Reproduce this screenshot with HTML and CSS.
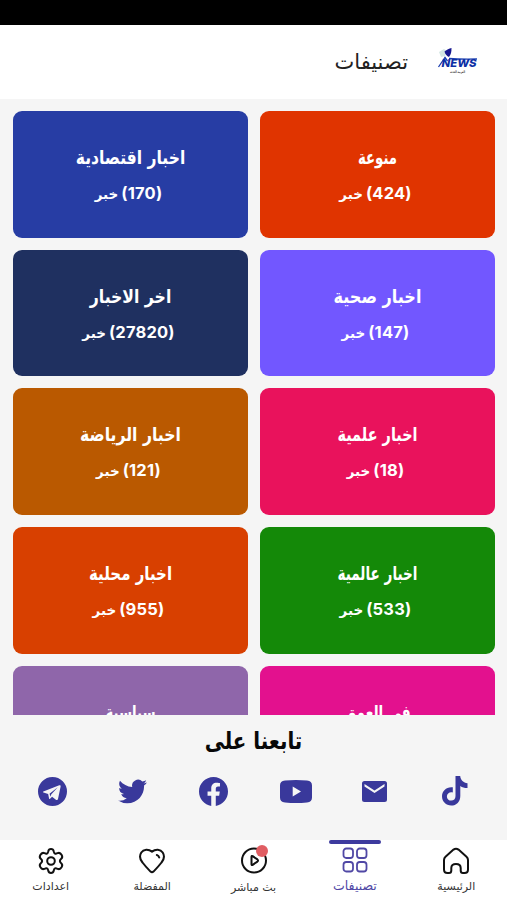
FILE: index.html
```html
<!DOCTYPE html>
<html lang="ar" dir="rtl">
<head>
<meta charset="utf-8">
<title>تصنيفات</title>
<link rel="stylesheet" href="styles.css">
</head>
<body>
<div class="status"></div>
<header class="header">
  <svg class="logo" viewBox="0 0 42 30" direction="ltr">
    <path d="M2 5l5-3 3 2-2 5-4 1z" fill="#d3e6e3"/>
    <path d="M7.500 4.500c2.500-2 4.500-3 7-3.500 0 4-.5 6.500-2.500 9-2-1-3.800-2.500-4.500-5.500z" fill="#16168f"/>
    <path d="M1.500 20L8 10.500l2.500 3.500M12 11.500c8 .6 17 .7 28 .5" fill="none" stroke="#1c3fb0" stroke-width="1.300"/>
    <text class="logo-word" x="4.500" y="20.300" textLength="35" lengthAdjust="spacingAndGlyphs">NEWS</text>
    <text class="logo-sub" x="13" y="25.500" textLength="15" lengthAdjust="spacingAndGlyphs">العربية الحدث</text>
  </svg>
  <h1 class="title">تصنيفات</h1>
</header>
<main class="list">
  <section class="card red"><h2>منوعة</h2><p><bdi>(424)</bdi><span>خبر</span></p></section>
  <section class="card blue"><h2>اخبار اقتصادية</h2><p><bdi>(170)</bdi><span>خبر</span></p></section>
  <section class="card violet"><h2>اخبار صحية</h2><p><bdi>(147)</bdi><span>خبر</span></p></section>
  <section class="card navy"><h2>اخر الاخبار</h2><p><bdi>(27820)</bdi><span>خبر</span></p></section>
  <section class="card rose"><h2>اخبار علمية</h2><p><bdi>(18)</bdi><span>خبر</span></p></section>
  <section class="card amber"><h2>اخبار الرياضة</h2><p><bdi>(121)</bdi><span>خبر</span></p></section>
  <section class="card green"><h2>اخبار عالمية</h2><p><bdi>(533)</bdi><span>خبر</span></p></section>
  <section class="card orange"><h2>اخبار محلية</h2><p><bdi>(955)</bdi><span>خبر</span></p></section>
  <section class="card pink"><h2>في العمق</h2></section>
  <section class="card purple"><h2>سياسية</h2></section>
</main>
<section class="follow">
  <h2 class="follow-title">تابعنا على</h2>
  <div class="social">
    <svg class="s-tiktok" viewBox="0 0 26 30"><path d="M13.500 0h4.700c.4 4 3.300 6.900 7.300 7.200v4.900c-2.700.1-5.200-.8-7.200-2.200v10C18.300 25.600 14.500 29.500 9.200 29.500 4 29.500 0 25.500 0 20.300c0-5.600 4.800-9.900 10.800-9v5.200c-3-.9-5.900 1-5.900 3.900 0 2.400 1.900 4.200 4.300 4.200 2.600 0 4.300-1.900 4.300-4.700z"/></svg>
    <svg class="s-mail" viewBox="0 0 25 21"><path d="M2.500 0h20A2.500 2.500 0 0 1 25 2.500v16a2.500 2.500 0 0 1-2.500 2.500h-20A2.500 2.500 0 0 1 0 18.500v-16A2.500 2.500 0 0 1 2.500 0zm20 3.100L12.500 9.500 2.500 3.100v2.500l10 6.400 10-6.400z"/></svg>
    <svg class="s-youtube" viewBox="0 0 32 23"><path fill-rule="evenodd" d="M5 .5Q16-.5 27 .5c3.500.3 5 2 5 5v12c0 3-1.500 4.700-5 5q-11 1-22 0c-3.500-.3-5-2-5-5v-12c0-3 1.500-4.700 5-5zM12.700 6.600v9.800l8.300-4.900z"/></svg>
    <svg class="s-facebook" viewBox="0 0 24 24"><path d="M24 12.070C24 5.440 18.630.070 12 .070S0 5.440 0 12.070c0 5.990 4.390 10.950 10.130 11.850v-8.380H7.080v-3.470h3.050V9.430c0-3.010 1.790-4.670 4.530-4.670 1.310 0 2.690.24 2.690.24v2.950h-1.520c-1.490 0-1.950.93-1.950 1.870v2.250h3.320l-.53 3.470h-2.790v8.380C19.610 23.020 24 18.060 24 12.070z"/></svg>
    <svg class="s-twitter" viewBox="0 0 24 20"><path d="M23.950 2.570a10 10 0 0 1-2.820.780 4.960 4.960 0 0 0 2.160-2.730c-.950.560-2 .960-3.130 1.190a4.920 4.920 0 0 0-8.380 4.480C7.690 6.090 4.070 4.130 1.640 1.160a4.820 4.820 0 0 0-.670 2.480c0 1.710.870 3.210 2.190 4.100a4.900 4.900 0 0 1-2.230-.620v.060a4.920 4.920 0 0 0 3.950 4.830 5 5 0 0 1-2.210.080 4.940 4.940 0 0 0 4.600 3.420A9.870 9.870 0 0 1 0 17.540a13.990 13.990 0 0 0 7.560 2.210c9.050 0 14-7.500 14-13.980l-.020-.640a9.940 9.940 0 0 0 2.410-2.560z"/></svg>
    <svg class="s-telegram" viewBox="0 0 28 28"><path fill-rule="evenodd" d="M14 0a14 14 0 1 0 0 28 14 14 0 0 0 0-28zM5.200 13.900 20.500 8c.9-.3 1.500.2 1.300 1.300l-2.500 12c-.2 1-.9 1.200-1.700.8l-4-3-2 1.900c-.5.500-.8.300-.9-.3l-.9-4.400-4.500-1.400c-.7-.3-.7-.7-.1-1zm5.900 2.200 8-6.300-6.400 7.100-.4 2.200z"/></svg>
  </div>
</section>
<nav class="nav">
  <a class="tab"><svg viewBox="0 0 28 28"><path d="M2 13Q2 11 3.500 9.700L11.500 2.600Q14 .8 16.500 2.600L24.500 9.700Q26 11 26 13V22.500Q26 26 22.500 26H21Q18.700 26 18.700 23.500V21Q18.700 17 14 17T9.300 21V23.500Q9.300 26 7 26H5.500Q2 26 2 22.500z"/></svg><span>الرئيسية</span></a>
  <a class="tab active"><svg viewBox="0 0 28 28"><rect x="2.500" y="1.500" width="9.500" height="9.500" rx="2.800"/><rect x="16" y="1.500" width="9.500" height="9.500" rx="2.800"/><rect x="2.500" y="15" width="9.500" height="9.500" rx="2.800"/><rect x="16" y="15" width="9.500" height="9.500" rx="2.800"/></svg><span>تصنيفات</span></a>
  <a class="tab live"><svg viewBox="0 0 28 28"><circle cx="14" cy="13.500" r="12"/><path d="M11.500 9.800Q11.500 8.500 12.700 9.200L17.400 12.400Q18.700 13.500 17.400 14.600L12.700 17.800Q11.500 18.500 11.500 17.200z"/></svg><i class="dot"></i><span>بث مباشر</span></a>
  <a class="tab"><svg viewBox="0 0 28 28"><path d="M14 4.600C17.500 1.800 22.500 2 24.700 5.500 26.700 8.700 26 12.500 23.500 15.500 21 18.800 18 22 15.500 24.600Q14 26 12.500 24.600C10 22 7 18.800 4.500 15.500 2 12.500 1.300 8.700 3.300 5.500 5.500 2 10.500 1.800 14 4.600zM18.800 8Q20.700 8.500 21.200 10.500"/></svg><span>المفضلة</span></a>
  <a class="tab"><svg viewBox="0 0 28 28"><path d="M11.300 4.200Q11.700 2 14 2T16.700 4.200C17.300 6.700 18.300 7.200 20.500 6.200 22.500 5.300 23.700 6.200 24.700 7.900 25.700 9.700 25.500 10.800 24 12 22.500 13.300 22.500 14.700 24 16 25.500 17.200 25.700 18.300 24.700 20.100 23.700 21.800 22.500 22.700 20.500 21.800 18.300 20.800 17.300 21.300 16.700 23.800Q16.300 26 14 26T11.300 23.800C10.700 21.300 9.700 20.800 7.500 21.800 5.500 22.700 4.300 21.800 3.300 20.100 2.300 18.300 2.500 17.200 4 16 5.500 14.700 5.500 13.300 4 12 2.500 10.800 2.300 9.700 3.300 7.900 4.300 6.200 5.500 5.300 7.500 6.200 9.700 7.200 10.700 6.700 11.300 4.200z"/><circle cx="14" cy="14" r="3.800"/></svg><span>اعدادات</span></a>
</nav>
</body>
</html>
```
FILE: styles.css
```css
* { box-sizing: border-box; }
body {
  margin: 0;
  width: 507px;
  height: 900px;
  overflow: hidden;
  display: flex;
  flex-direction: column;
  background: #f5f5f5;
  font-family: Inter, "DejaVu Sans", sans-serif;
}
h1, h2, p { margin: 0; }
.status { height: 25px; background: #000; flex: none; }
.header {
  height: 74px;
  flex: none;
  display: flex;
  align-items: center;
  padding-right: 28px;
  background: #fff;
}
.logo { width: 42px; height: 30px; overflow: visible; }
.logo-word { font: italic 800 11px Inter, sans-serif; fill: #0c2fa5; }
.logo-sub { font: bold 3.500px "DejaVu Sans", sans-serif; fill: #333; }
.title {
  margin-right: 29px;
  font: 400 21px/30px "DejaVu Sans", sans-serif;
  color: #222;
}
.list {
  height: 616px;
  flex: none;
  overflow: hidden;
  padding: 12px 12px 0 13px;
  display: grid;
  grid-template-columns: 235px 235px;
  grid-auto-rows: 126.500px;
  gap: 12.200px 12px;
}
.card {
  --squeeze: .8;
  border-radius: 9px;
  padding-top: 31px;
  text-align: center;
  color: #fff;
}
.card h2 {
  font: 700 19px/30px "DejaVu Sans", sans-serif;
  transform: scaleX(var(--squeeze));
}
.card p {
  margin-top: 8px;
  display: flex;
  justify-content: center;
  align-items: baseline;
  gap: 3px;
  padding-right: 4px;
  line-height: 26px;
}
.card bdi { font: 700 16.500px/26px Inter, sans-serif; letter-spacing: .2px; }
.card span { font: 700 13.500px/26px "DejaVu Sans", sans-serif; }
.red { background: #e03400; --squeeze: .7; }
.blue { background: #273da4; --squeeze: .82; }
.violet { background: #7257ff; --squeeze: .845; }
.navy { background: #1f3060; --squeeze: .825; }
.rose { background: #e9125c; --squeeze: .76; }
.amber { background: #ba5900; --squeeze: .825; }
.green { background: #148908; --squeeze: .715; }
.orange { background: #d84000; --squeeze: .79; }
.pink { background: #e3118e; --squeeze: .72; }
.purple { background: #8f66aa; --squeeze: .7; }
.follow { height: 125px; flex: none; }
.follow-title {
  padding-top: 8px;
  text-align: center;
  font: 700 24px/37px "DejaVu Sans", sans-serif;
  color: #080808;
  transform: scaleX(.825);
}
.social {
  height: 62px;
  display: grid;
  grid-template-columns: repeat(6, 80.600px);
  justify-content: center;
  align-items: center;
  justify-items: center;
  fill: #39389b;
}
.s-tiktok { width: 26px; height: 30px; }
.s-mail { width: 25px; height: 21px; }
.s-youtube { width: 32px; height: 23px; margin-left: 4px; }
.s-facebook { width: 29px; height: 29px; }
.s-twitter { width: 29px; height: 25px; }
.s-telegram { width: 29px; height: 29px; }
.nav {
  height: 60px;
  flex: none;
  display: grid;
  grid-template-columns: repeat(5, 101.400px);
  background: #fff;
}
.tab {
  position: relative;
  display: flex;
  flex-direction: column;
  align-items: center;
  padding-top: 7px;
  color: #333;
}
.tab svg { width: 28px; height: 28px; fill: none; stroke: #111; stroke-width: 2; stroke-linecap: round; stroke-linejoin: round; }
.tab span { font: 400 11px/22px "DejaVu Sans", sans-serif; white-space: nowrap; margin-top: 1px; }
.tab.live span { margin-top: 2px; }
.tab.active { color: #5048a5; }
.tab.active svg { stroke: #5048a5; stroke-width: 1.800; }
.tab.active span { font-size: 12.500px; margin-top: 0; }
.tab.active::before {
  content: "";
  position: absolute;
  top: 0;
  width: 52px;
  height: 4px;
  border-radius: 2px;
  background: #3d3a9e;
}
.dot {
  position: absolute;
  top: 5px;
  left: 53px;
  width: 12px;
  height: 12px;
  border-radius: 50%;
  background: #e05d62;
}
```
